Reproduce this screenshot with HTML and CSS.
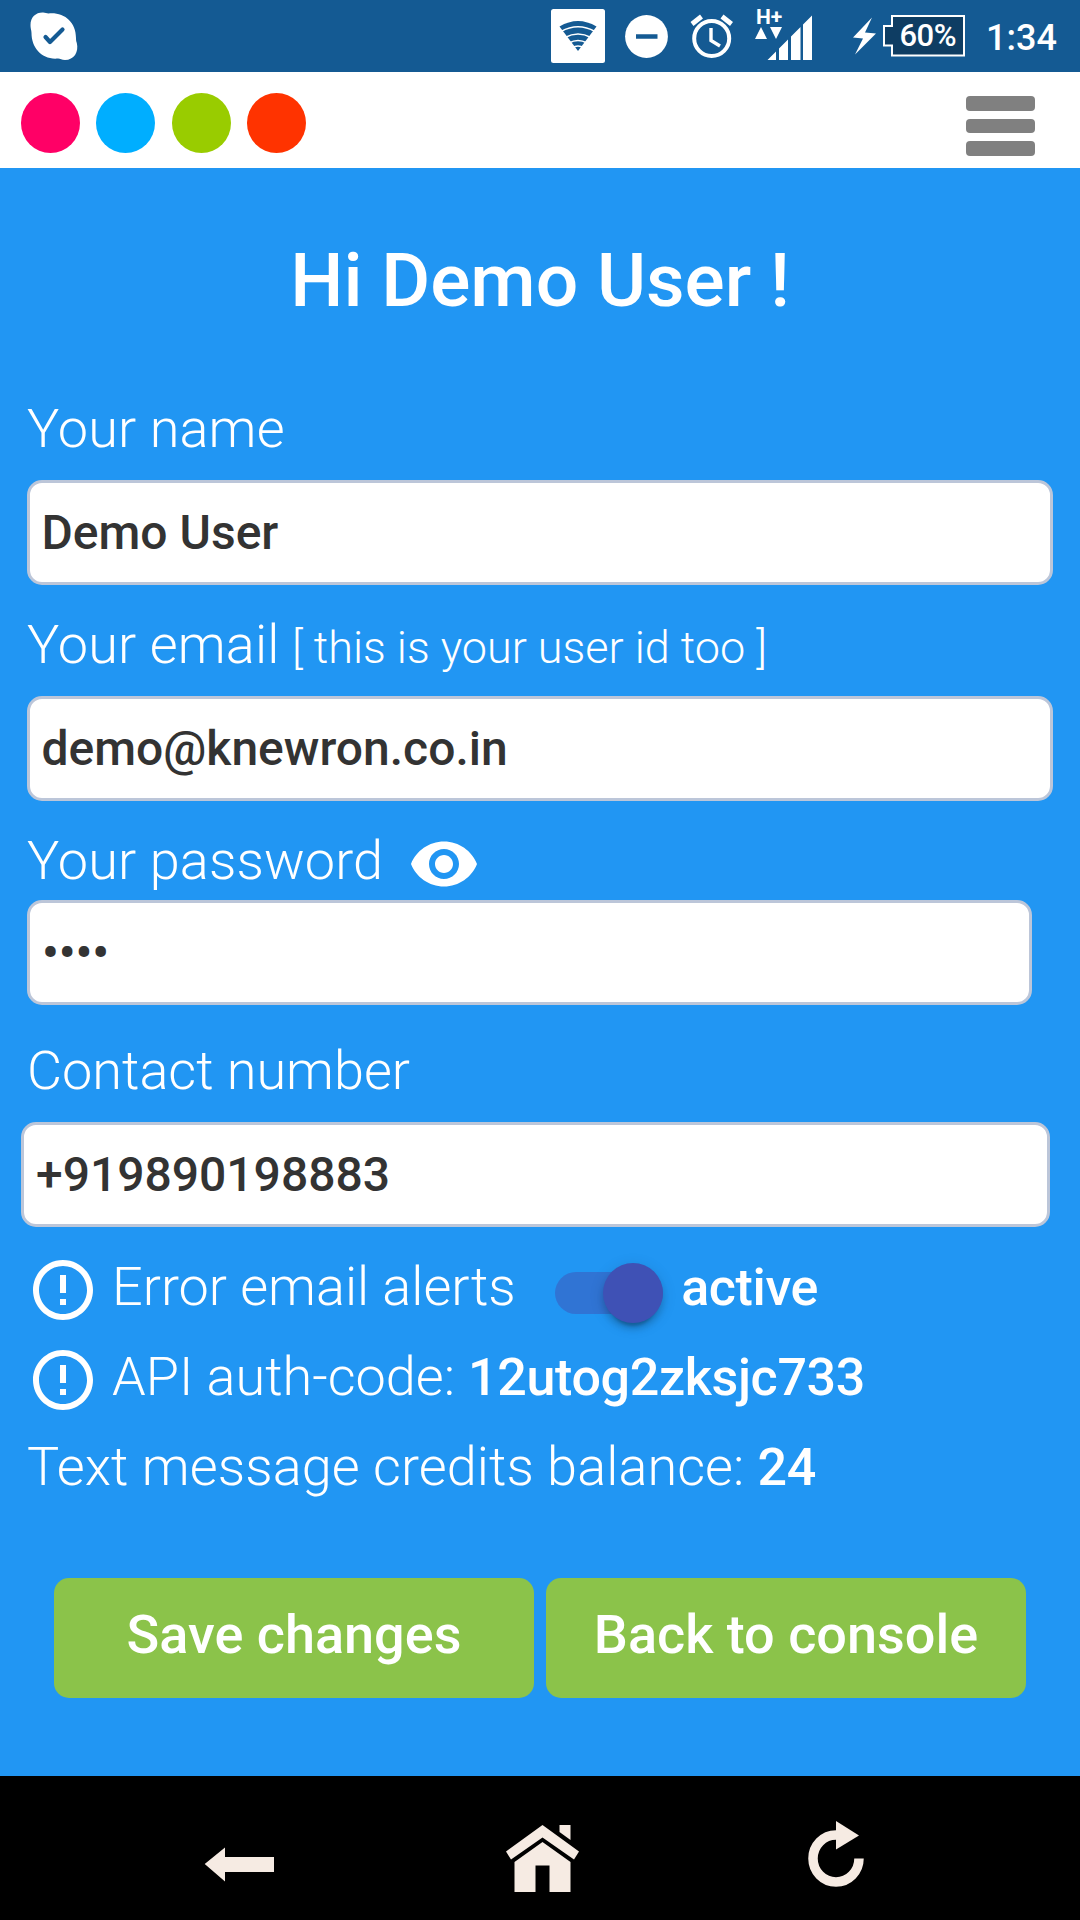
FILE: index.html
```html
<!DOCTYPE html>
<html lang="en">
<head>
<meta charset="utf-8">
<title>Profile</title>
<link rel="stylesheet" href="styles.css">
</head>
<body>
<div class="status-bar">
  <svg class="status-left" width="80" height="72" viewBox="0 0 80 72">
    <path fill="#fff" d="M30.500 25C30.500 17 36 12.300 43 12.500C45.500 12.500 46.500 13.500 48.500 13.500C64 12 76 22 76 38C76 40.500 76.200 41 76.800 43C79 52 74 60 65 60C61.500 60 60.500 58.500 58 58.500C42 60 31.500 48 31.500 33C31.500 30 30.500 29 30.500 25Z"/>
    <path fill="none" stroke="#145a93" stroke-width="4.200" stroke-linecap="round" stroke-linejoin="round" d="M45.500 37l4.500 5 12.500-12.500"/>
  </svg>
  <svg class="status-right" width="350" height="72" viewBox="540 0 350 72">
    <rect x="551" y="9" width="54" height="54" rx="2.500" fill="#fff"/>
    <path fill="#145a93" d="M559.500 26.500Q578 15.500 596.500 26.500L578 51Z"/>
    <g fill="none" stroke="#fff" stroke-width="1.500">
      <path d="M561 31.500q17-9.500 34 0M565 37.500q13-7 26 0M569 43q9-5 18 0M572 48q6-4 12 0"/>
    </g>
    <circle cx="646.500" cy="36.500" r="21.400" fill="#fff"/>
    <path stroke="#145a93" stroke-width="4.500" d="M636 36.500h21.500"/>
    <g fill="none" stroke="#fff">
      <circle cx="711.700" cy="38.500" r="17.500" stroke-width="4"/>
      <path stroke-width="3.400" d="M711 28v12.500l9 5.500"/>
      <path stroke-width="4.800" d="M692 24l9.500-7.500M731.500 24l-9.500-7.500"/>
    </g>
    <path fill="#fff" d="M755 39l6-12 6 12zM770 27h12l-6 12zM767.500 60l8.500-8.500V60zM779 60V48.500l9-9V60zM791 60V36.500l9.500-9.500V60zM803 60V24.500l9-9V60z"/>
    <path fill="#fff" d="M872 17.500L853 37.500l10 1L855 54.500l21-21-11-1z"/>
  </svg>
  <span class="net">H+</span>
  <div class="battery">
    <svg width="84" height="44" viewBox="882 14 84 44"><path fill="#0e3d63" stroke="#fff" stroke-width="2" d="M892 16h72v39.500H892V45.500h-8V26h8z"/></svg>
    <span class="battery-level">60%</span>
  </div>
  <span class="clock">1:34</span>
</div>
<header class="app-bar">
  <div class="dots">
    <span class="dot pink"></span><span class="dot sky"></span><span class="dot lime"></span><span class="dot red"></span>
  </div>
  <div class="menu"><i></i><i></i><i></i></div>
</header>
<main class="profile">
  <h1 class="title">Hi Demo User !</h1>
  <div class="label">Your name</div>
  <div class="field">Demo User</div>
  <div class="label next">Your email <small>[ this is your user id too ]</small></div>
  <div class="field">demo@knewron.co.in</div>
  <div class="label next tight">Your password
    <svg class="eye" width="72" height="72" viewBox="0 0 24 24"><path fill="#fff" d="M12 4.500C7 4.500 2.730 7.610 1 12c1.730 4.390 6 7.500 11 7.500s9.270-3.110 11-7.500c-1.730-4.390-6-7.500-11-7.500zM12 17c-2.760 0-5-2.240-5-5s2.240-5 5-5 5 2.240 5 5-2.240 5-5 5zm0-8c-1.660 0-3 1.340-3 3s1.340 3 3 3 3-1.340 3-3-1.340-3-3-3z"/></svg>
  </div>
  <div class="field password">••••</div>
  <div class="label contact">Contact number</div>
  <div class="field phone">+919890198883</div>
  <div class="rows">
    <div class="row">
      <svg class="info" width="72" height="72" viewBox="0 0 24 24"><path fill="#fff" d="M11 15h2v2h-2zm0-8h2v6h-2zm.990-5C6.470 2 2 6.480 2 12s4.470 10 9.990 10C17.520 22 22 17.520 22 12S17.520 2 11.990 2zM12 20c-4.420 0-8-3.580-8-8s3.580-8 8-8 8 3.580 8 8-3.580 8-8 8z"/></svg>
      <span>Error email alerts</span>
      <span class="switch"><span class="thumb"></span></span>
      <b>active</b>
    </div>
    <div class="row">
      <svg class="info" width="72" height="72" viewBox="0 0 24 24"><path fill="#fff" d="M11 15h2v2h-2zm0-8h2v6h-2zm.990-5C6.470 2 2 6.480 2 12s4.470 10 9.990 10C17.520 22 22 17.520 22 12S17.520 2 11.990 2zM12 20c-4.420 0-8-3.580-8-8s3.580-8 8-8 8 3.580 8 8-3.580 8-8 8z"/></svg>
      <span>API auth-code:</span><b class="value">12utog2zksjc733</b>
    </div>
    <div class="row"><span class="credits">Text message credits balance:</span><b class="value">24</b></div>
  </div>
  <div class="actions">
    <button>Save changes</button>
    <button>Back to console</button>
  </div>
</main>
<nav class="nav-bar">
  <svg width="1080" height="144" viewBox="0 1776 1080 144">
    <g fill="#f6ebe3">
      <path d="M204.700 1864l20.300-16.500v9.500h49v15h-49v9.500z"/>
      <path d="M542.500 1825l36.500 26.500-5 8-31.500-22-31.500 22-5-8zM559.500 1825h11v15l-11-8zM542.500 1842l28 20v30h-21v-26.500h-14V1892h-21v-30z"/>
      <path d="M836 1821l23 14.500-23 14z"/>
    </g>
    <path fill="none" stroke="#f6ebe3" stroke-width="9.500" d="M859 1858.500a23 23.500 0 1 1-23-23.500"/>
  </svg>
</nav>
</body>
</html>
```
FILE: styles.css
```css
* { box-sizing: border-box; }
body {
  margin: 0;
  width: 1080px;
  height: 1920px;
  overflow: hidden;
  display: flex;
  flex-direction: column;
  background: #000;
  color: #fff;
  font-family: Roboto, "Liberation Sans", sans-serif;
}
svg { display: block; flex: none; }

.status-bar {
  position: relative;
  display: flex;
  height: 72px;
  background: #145a93;
  font-weight: 500;
}
.status-right { margin-left: 460px; margin-right: -8px; }
.net {
  position: absolute;
  left: 756px;
  top: 5px;
  font: 700 21px/24px Roboto, sans-serif;
}
.battery { position: relative; margin-top: 14px; }
.battery-level {
  position: absolute;
  left: 17.5px;
  top: 4px;
  font-size: 31px;
  line-height: 36px;
  letter-spacing: -.5px;
}
.clock { margin-left: 20px; font-size: 36px; line-height: 76px; }

.app-bar {
  display: flex;
  justify-content: space-between;
  height: 96px;
  padding: 21px 45px 0 21.3px;
  background: #fff;
}
.dots { display: flex; gap: 16.2px; }
.dot { width: 59px; height: 60px; border-radius: 50%; }
.pink { background: #ff0066; }
.sky { background: #00aeff; }
.lime { background: #99cc00; }
.red { background: #ff3300; }
.menu { display: flex; flex-direction: column; gap: 8px; padding-top: 3px; }
.menu i { width: 69px; height: 15px; border-radius: 4px; background: #808080; }
.menu i:nth-child(2) { height: 14px; }

.profile {
  height: 1608px;
  padding: 67px 27px 0;
  background: #2196f3;
  font-weight: 300;
}
.title {
  margin: 0 0 68px;
  text-align: center;
  font-size: 75px;
  font-weight: 500;
  line-height: 90px;
}
.label {
  display: flex;
  align-items: baseline;
  height: 72px;
  margin-bottom: 15px;
  font-size: 54px;
  line-height: 72px;
  letter-spacing: .15px;
}
.label small { margin-left: 12.5px; font-size: 45px; letter-spacing: 0; }
.next { margin-top: 24px; }
.contact { margin-top: 30px; letter-spacing: 0; }
.tight { margin-bottom: 3px; }
.eye { align-self: flex-start; margin: 3px 0 0 25px; }
.field {
  width: 1026px;
  height: 105px;
  padding-left: 11.5px;
  border: 3px solid #bcc6d9;
  border-radius: 15px;
  background: #fff;
  color: #333;
  font-size: 48px;
  font-weight: 500;
  line-height: 99px;
}
.password { width: 1005px; padding-left: 12px; }
.phone { width: 1029px; margin-left: -6px; padding-left: 12px; }
.rows { padding-top: 15px; }
.row { display: flex; align-items: center; height: 90px; font-size: 54px; line-height: 90px; }
.row b { padding-top: 1.4px; font-size: 52px; font-weight: 500; letter-spacing: -.35px; }
.info { margin: 6px 13px 0 0; }
.value { margin-left: 13px; }
.credits { letter-spacing: .08px; }
.switch {
  width: 108px;
  height: 42px;
  margin: 12px 18px 0 39.5px;
  border-radius: 21px;
  background: rgba(63, 81, 181, .5);
}
.thumb {
  display: block;
  width: 60px;
  height: 60px;
  margin: -9px 0 0 48px;
  border-radius: 50%;
  background: #3f51b5;
  box-shadow: 0 6px 6px rgba(0, 0, 0, .14), 0 9px 3px -6px rgba(0, 0, 0, .2), 0 3px 15px rgba(0, 0, 0, .12);
}
.actions { display: flex; gap: 12px; padding: 66px 27px 0; }
.actions button {
  width: 480px;
  height: 120px;
  padding: 0 0 6px;
  border: 0;
  border-radius: 15px;
  background: #8bc34a;
  color: #fff;
  font: 500 54px/72px Roboto, "Liberation Sans", sans-serif;
}
.nav-bar { height: 144px; background: #000; }
```
